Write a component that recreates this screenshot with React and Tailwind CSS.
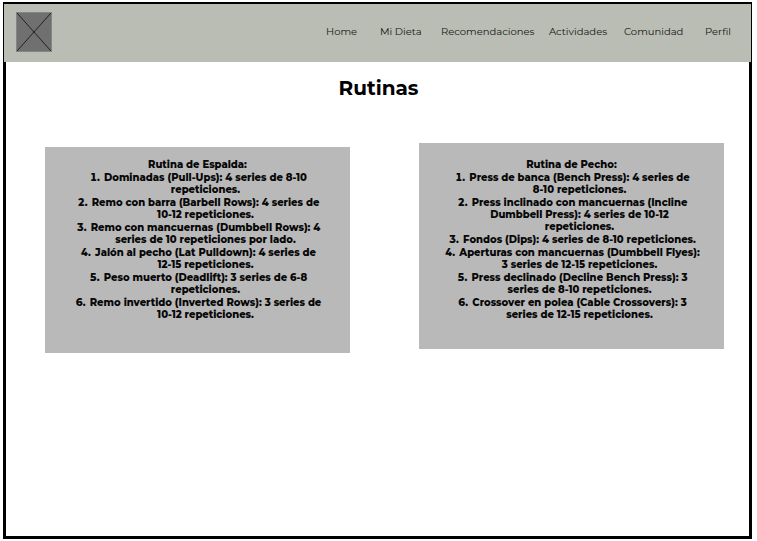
const links = [
  { label: "Home", href: "#home" },
  { label: "Mi Dieta", href: "#dieta" },
  { label: "Recomendaciones", href: "#recomendaciones" },
  { label: "Actividades", href: "#actividades" },
  { label: "Comunidad", href: "#comunidad" },
  { label: "Perfil", href: "#perfil" },
];

const espalda = [
  ["Dominadas (Pull-Ups): 4 series de 8-10", "repeticiones."],
  ["Remo con barra (Barbell Rows): 4 series de", "10-12 repeticiones."],
  ["Remo con mancuernas (Dumbbell Rows): 4", "series de 10 repeticiones por lado."],
  ["Jalón al pecho (Lat Pulldown): 4 series de", "12-15 repeticiones."],
  ["Peso muerto (Deadlift): 3 series de 6-8", "repeticiones."],
  ["Remo invertido (Inverted Rows): 3 series de", "10-12 repeticiones."],
];

const pecho = [
  ["Press de banca (Bench Press): 4 series de", "8-10 repeticiones."],
  ["Press inclinado con mancuernas (Incline", "Dumbbell Press): 4 series de 10-12", "repeticiones."],
  ["Fondos (Dips): 4 series de 8-10 repeticiones."],
  ["Aperturas con mancuernas (Dumbbell Flyes):", "3 series de 12-15 repeticiones."],
  ["Press declinado (Decline Bench Press): 3", "series de 8-10 repeticiones."],
  ["Crossover en polea (Cable Crossovers): 3", "series de 12-15 repeticiones."],
];

function Logo() {
  return (
    <svg className="h-10 w-9 shrink-0" viewBox="0 0 36 40" role="img" aria-label="Logo">
      <rect width="36" height="40" fill="#707070" />
      <rect x="0.5" y="0.5" width="35" height="39" fill="none" stroke="#848484" />
      <path d="M1 1L35 39M35 1L1 39" stroke="#222" strokeWidth="1" />
    </svg>
  );
}

function Routine({ title, items, className }) {
  return (
    <section
      className={`min-h-[206px] bg-[#b9b9b9] pb-7 text-center text-[10px] leading-[12px] font-extrabold whitespace-nowrap text-[#080808] ${className}`}
    >
      <h2 className="mb-px">{title}</h2>
      <ol className="flex flex-col gap-px pl-4">
        {items.map((lines, i) => (
          <li key={lines[0]}>
            {lines.map((line, n) => (
              <span key={line} className="block">
                {n === 0 && (
                  <span className="-ml-3.5 inline-block w-3.5 text-left tabular-nums">{i + 1}.</span>
                )}
                {line}
              </span>
            ))}
          </li>
        ))}
      </ol>
    </section>
  );
}

export default function App() {
  return (
    <div className="flex min-h-screen flex-col bg-white pt-0.5 pr-[5px] pb-0.5 pl-[3px] font-[Montserrat,Inter,sans-serif]">
      <div className="flex grow flex-col border-[3px] border-t-2 border-black">
        <header className="-mx-0.5 flex h-[58px] items-center justify-between bg-[#babdb3] pr-[19px] pb-0.5 pl-3">
          <Logo />
          <nav className="grid grid-cols-[54px_61px_108px_75px_81px_27px] text-[10px] leading-4 whitespace-nowrap text-[#141513]">
            {links.map((link) => (
              <a key={link.href} href={link.href}>
                {link.label}
              </a>
            ))}
          </nav>
        </header>
        <main className="pr-[25px] pl-[39px]">
          <h1 className="-ml-3 pt-3 text-center text-xl leading-7 font-bold text-black">Rutinas</h1>
          <div className="grid grid-cols-2 items-start gap-x-[69px] pt-[41px]">
            <Routine title="Rutina de Espalda:" items={espalda} className="mt-1 pt-3" />
            <Routine title="Rutina de Pecho:" items={pecho} className="pt-4" />
          </div>
        </main>
      </div>
    </div>
  );
}
